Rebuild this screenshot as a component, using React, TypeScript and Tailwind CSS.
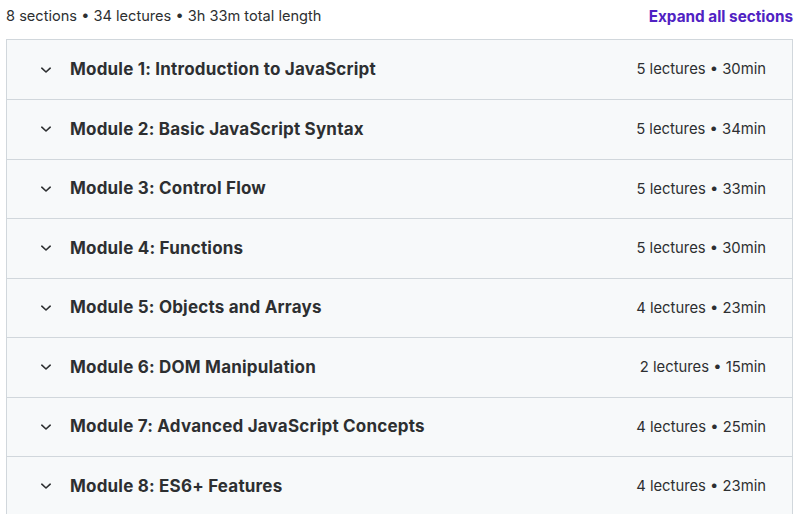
import React from "react";

const modules = [
  ["Module 1: Introduction to JavaScript", "5 lectures • 30min"],
  ["Module 2: Basic JavaScript Syntax", "5 lectures • 34min"],
  ["Module 3: Control Flow", "5 lectures • 33min"],
  ["Module 4: Functions", "5 lectures • 30min"],
  ["Module 5: Objects and Arrays", "4 lectures • 23min"],
  ["Module 6: DOM Manipulation", "2 lectures • 15min"],
  ["Module 7: Advanced JavaScript Concepts", "4 lectures • 25min"],
  ["Module 8: ES6+ Features", "4 lectures • 23min"],
];

function Chevron() {
  return (
    <svg width="12" height="12" viewBox="0 0 12 12" className="shrink-0">
      <path d="M1.8 4.2 L6 8 L10.2 4.2" fill="none" stroke="#2d2f31" strokeWidth="1.6" strokeLinecap="round" strokeLinejoin="round" />
    </svg>
  );
}

export default function App() {
  return (
    <div className="w-[804px] h-[514px] overflow-hidden bg-white text-[#2d2f31]" style={{ fontFamily: "Inter, 'Noto Sans', sans-serif" }}>
      <div className="flex items-center justify-between h-[34px] pl-[6px] pr-[11px]">
        <span className="text-[14.6px]">8 sections • 34 lectures • 3h 33m total length</span>
        <span className="text-[15.3px] font-bold text-[#5022c3]">Expand all sections</span>
      </div>
      <div className="ml-[6px] mr-[11px] mt-[5px] border border-[#d1d7dc] border-b-0">
        {modules.map(([title, meta], i) => (
          <div
            key={i}
            className={`flex items-center justify-between bg-[#f7f9fa] pl-[33px] pr-[26px] ${i > 0 ? "h-[59.5px] border-t border-[#d1d7dc]" : "h-[59px]"}`}
          >
            <div className="flex items-center gap-[18px]">
              <Chevron />
              <span className="text-[17px] font-bold tracking-[0.2px]">{title}</span>
            </div>
            <span className="text-[14.8px]">{meta}</span>
          </div>
        ))}
      </div>
    </div>
  );
}
